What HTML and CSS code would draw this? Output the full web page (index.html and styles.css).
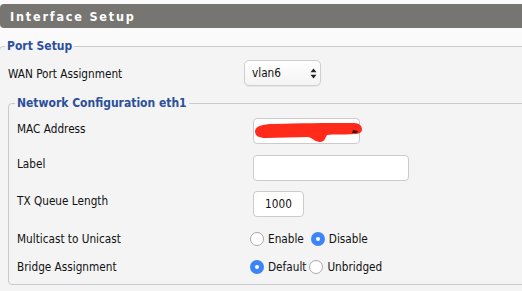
FILE: index.html
```html
<!DOCTYPE html>
<html>
<head>
<meta charset="utf-8">
<link rel="stylesheet" href="styles.css">
</head>
<body>
<div class="page">
  <h2 class="title">Interface Setup</h2>
  <fieldset class="box port">
    <legend class="legend">Port Setup</legend>
    <div class="row wan">
      <span class="label">WAN Port Assignment</span>
      <div class="select-wrap">
        <select class="select"><option>vlan6</option></select>
        <svg class="arrows" width="7" height="11" viewBox="0 0 7 11"><path d="M3.5 0.5 L6.5 4.2 H0.5 Z M3.5 10.5 L6.5 6.8 H0.5 Z" fill="#222"/></svg>
      </div>
    </div>
    <fieldset class="box net">
      <legend class="legend">Network Configuration eth1</legend>
      <div class="row r-mac">
        <span class="label">MAC Address</span>
        <div class="mac-wrap">
          <input class="input mac" type="text">
          <svg class="scribble" width="110" height="24" viewBox="0 0 110 24"><path d="M1 10 C2 5 8 3 20 3 C45 2 70 2 100 2 C105 2 108 5 108 8 C108 12 105 13 100 13 C90 14 80 13 73 14 C71 17 71 21 66 21 C61 21 59 17 54 16 C40 16 25 17 12 17 C5 17 1 15 1 10 Z" fill="#ff2a1a"/><path d="M99 9 L104 10 L103 12 L98 12 Z" fill="#3a1a10"/></svg>
        </div>
      </div>
      <div class="row r-label">
        <span class="label">Label</span>
        <input class="input lbl" type="text">
      </div>
      <div class="row r-tx">
        <span class="label">TX Queue Length</span>
        <input class="input tx" type="text" value="1000">
      </div>
      <div class="row r-radio">
        <span class="label">Multicast to Unicast</span>
        <div class="radios">
          <label class="opt"><span class="radio"></span>Enable</label>
          <label class="opt"><span class="radio on"></span>Disable</label>
        </div>
      </div>
      <div class="row r-radio">
        <span class="label">Bridge Assignment</span>
        <div class="radios tight">
          <label class="opt"><span class="radio on"></span>Default</label>
          <label class="opt"><span class="radio"></span>Unbridged</label>
        </div>
      </div>
    </fieldset>
  </fieldset>
</div>
</body>
</html>
```

FILE: styles.css
```css
html, body {
  margin: 0;
  padding: 0;
  background: #fafafa;
  overflow: hidden;
}
body {
  font-family: "DejaVu Sans Condensed", "DejaVu Sans", sans-serif;
  font-size: 11.7px;
  color: #111;
}
.page {
  width: 522px;
  height: 291px;
  overflow: hidden;
  padding-top: 4px;
  box-sizing: border-box;
}
.title {
  margin: 0;
  height: 24px;
  line-height: 25px;
  background: #777571;
  color: #fff;
  font-size: 12.5px;
  font-weight: bold;
  letter-spacing: 1.8px;
  padding-left: 10px;
  border-radius: 4px 0 0 4px;
}
.box {
  border: 1px solid #cacaca;
  border-radius: 4px;
  background: #f4f4f4;
  margin: 0;
  min-width: 0;
}
.port {
  margin-top: 11px;
  margin-left: -1px;
  width: 540px;
  padding: 7px 0 0 8px;
  height: 260px;
}
.legend {
  color: #2c4f9c;
  font-weight: bold;
  font-size: 12px;
  padding: 0 2px;
  margin-left: -3px;
  line-height: 14px;
}
.row {
  display: flex;
  align-items: flex-start;
}
.label {
  display: block;
  line-height: 14px;
}
.wan .label {
  width: 236px;
  padding-top: 7px;
}
.select-wrap {
  position: relative;
  width: 77px;
  height: 26px;
}
.select {
  appearance: none;
  -webkit-appearance: none;
  width: 77px;
  height: 26px;
  margin: 0;
  border: 1px solid #cfcfcf;
  border-radius: 5px;
  background: linear-gradient(#ffffff, #f3f3f3);
  box-shadow: 0 1px 1px rgba(0,0,0,0.06);
  font-family: "DejaVu Sans Condensed", "DejaVu Sans", sans-serif;
  font-size: 11.7px;
  color: #111;
  padding: 0 0 0 7px;
}
.arrows {
  position: absolute;
  left: 66px;
  top: 8px;
}
.net {
  margin-top: 10px;
  width: 560px;
  padding: 8px 0 0 8px;
  height: 179px;
}
.net .legend {
  margin-left: -2px;
}
.net .label {
  width: 233px;
}
.input {
  box-sizing: border-box;
  height: 26px;
  margin: 0 0 0 3px;
  border: 1px solid #cbcbcb;
  border-radius: 4px;
  background: #fff;
  font-family: "DejaVu Sans Condensed", "DejaVu Sans", sans-serif;
  font-size: 11.7px;
  color: #111;
  padding: 0;
}
.r-mac {
  height: 37px;
}
.r-mac .label {
  padding-top: 4px;
}
.mac-wrap {
  position: relative;
}
.mac {
  width: 107px;
}
.scribble {
  position: absolute;
  left: 4px;
  top: 3px;
}
.r-label {
  height: 36px;
}
.r-label .label {
  padding-top: 2px;
}
.lbl {
  width: 156px;
}
.r-tx {
  height: 34px;
}
.r-tx .label {
  padding-top: 3px;
}
.tx {
  width: 51px;
  text-align: center;
}
.r-radio {
  height: 28px;
  align-items: center;
}
.radios {
  display: flex;
  gap: 7px;
}
.radios.tight {
  gap: 3px;
}
.opt {
  display: flex;
  align-items: center;
  gap: 4px;
}
.radio {
  box-sizing: border-box;
  width: 14px;
  height: 14px;
  border-radius: 50%;
  border: 1px solid #a9a9a9;
  background: #fff;
  position: relative;
}
.radio.on {
  border: none;
  background: #3d85f6;
}
.radio.on::after {
  content: "";
  position: absolute;
  left: 5px;
  top: 5px;
  width: 4px;
  height: 4px;
  border-radius: 50%;
  background: #fff;
}
```
